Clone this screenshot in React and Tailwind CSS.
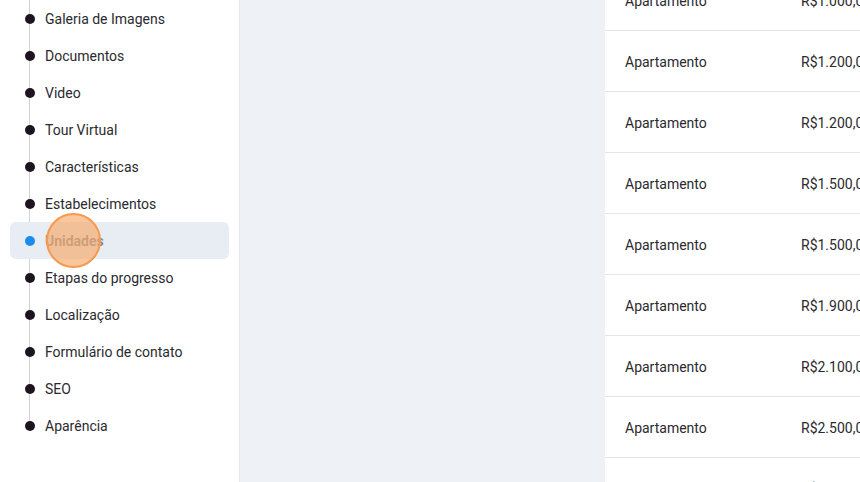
import React from "react";

const sections = [
  "Galeria de Imagens",
  "Documentos",
  "Video",
  "Tour Virtual",
  "Características",
  "Estabelecimentos",
  "Unidades",
  "Etapas do progresso",
  "Localização",
  "Formulário de contato",
  "SEO",
  "Aparência",
];

const units = [
  { type: "Apartamento", price: "R$1.000,00" },
  { type: "Apartamento", price: "R$1.200,00" },
  { type: "Apartamento", price: "R$1.200,00" },
  { type: "Apartamento", price: "R$1.500,00" },
  { type: "Apartamento", price: "R$1.500,00" },
  { type: "Apartamento", price: "R$1.900,00" },
  { type: "Apartamento", price: "R$2.100,00" },
  { type: "Apartamento", price: "R$2.500,00" },
  { type: "Apartamento", price: "R$2.800,00" },
];

function Sidebar() {
  return (
    <aside className="w-[240px] shrink-0 border-r border-[#e6e8ee] bg-white">
      <div className="relative">
        <div className="absolute left-[29px] top-0 h-[426px] w-px bg-[#cfd2d8]" />
        {sections.map((label) => {
          const active = label === "Unidades";
          return (
            <div
              key={label}
              className={
                active
                  ? "relative mx-[10px] flex h-[37px] items-center gap-[10px] rounded-md bg-[#e8edf4] pl-[15px]"
                  : "relative mx-[10px] flex h-[37px] items-center gap-[10px] pl-[15px]"
              }
            >
              <span
                className={
                  active
                    ? "h-[10px] w-[10px] shrink-0 rounded-full bg-[#1a8cf0]"
                    : "h-[10px] w-[10px] shrink-0 rounded-full bg-[#1c1520]"
                }
              />
              <span
                className={
                  active
                    ? "pt-[2px] text-[14px] font-semibold text-[#7f8794]"
                    : "pt-[2px] text-[14px] text-[#2a2a2e]"
                }
              >
                {label}
              </span>
              {active && (
                <span className="absolute left-[36px] top-[-9px] h-[55px] w-[55px] rounded-full border-2 border-[#f59a4e] bg-[#f7a867]/65" />
              )}
            </div>
          );
        })}
      </div>
    </aside>
  );
}

function UnitsTable() {
  return (
    <div className="-mt-[30px] flex-1 bg-white">
      {units.map((unit, i) => (
        <div
          key={i}
          className="flex h-[61px] items-center border-b border-[#e1e4ea] pt-[2px] text-[14px] text-[#2a2a2e]"
        >
          <div className="w-[196px] shrink-0 pl-[20px]">{unit.type}</div>
          <div className="whitespace-nowrap">{unit.price}</div>
        </div>
      ))}
    </div>
  );
}

export default function App() {
  return (
    <div
      className="flex h-[482px] w-[860px] overflow-hidden bg-[#eef1f6]"
      style={{ fontFamily: "Roboto, 'Liberation Sans', sans-serif" }}
    >
      <Sidebar />
      <div className="w-[365px] shrink-0" />
      <UnitsTable />
    </div>
  );
}
